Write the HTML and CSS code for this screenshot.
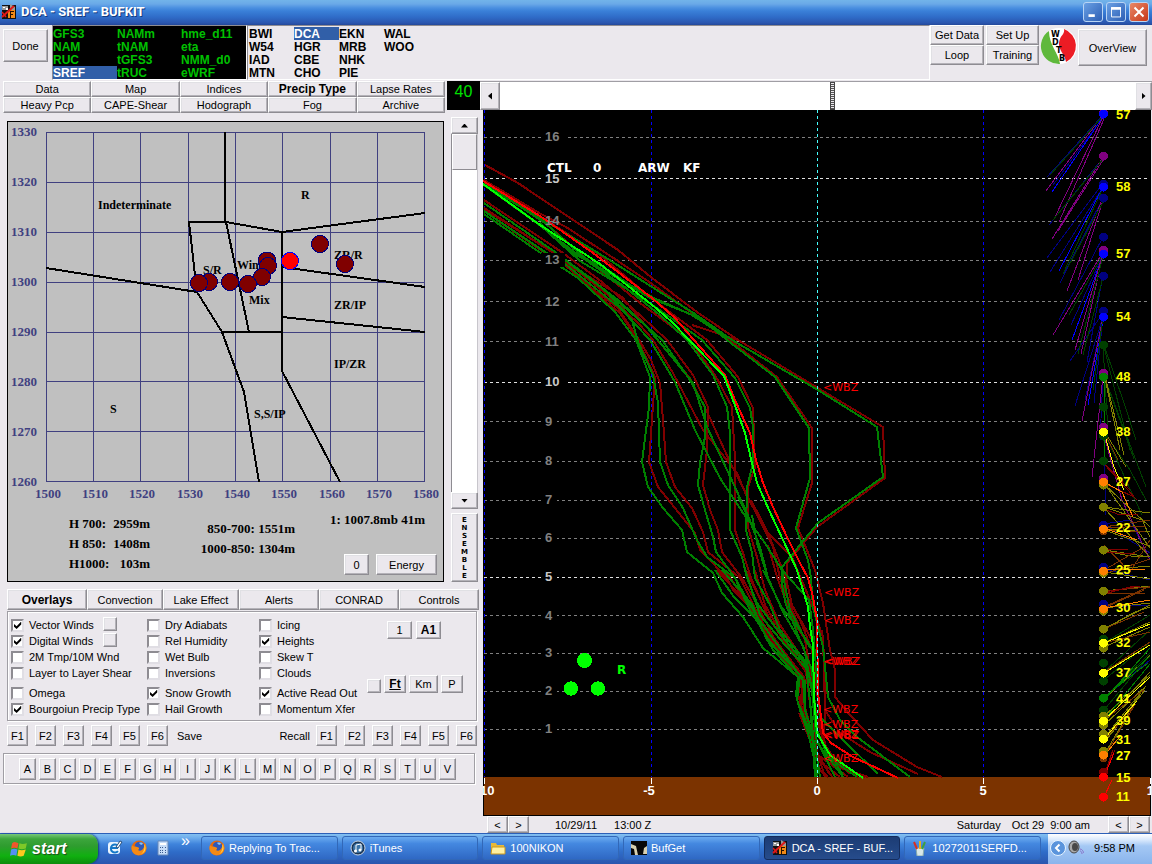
FILE: index.html
```html
<!DOCTYPE html>
<html lang="en">
<head>
<meta charset="utf-8">
<title>DCA - SREF - BUFKIT</title>
<link rel="stylesheet" href="styles.css">
</head>
<body>
<svg width="0" height="0" class="defs" aria-hidden="true">
  <defs>
    <symbol id="bufkit" viewBox="0 0 16 16">
      <rect x="1" y="1" width="14" height="14" fill="#111"/>
      <path d="M1 2h6v4H1zM9 0l5 3v3H9z" fill="#9a9a9a"/>
      <path d="M2 3h2v1H2zM5 4h2v2H5z" fill="#fff"/>
      <path d="M7 6h7v8H7z" fill="#f08a18"/>
      <path d="M9 7h4v1h-3v2h2v1h-2v3H9z" fill="#281000"/>
      <path d="M1 13L13 2" stroke="#e01818" stroke-width="2"/>
      <path d="M1 8l4 5" stroke="#e01818" stroke-width="1.500"/>
    </symbol>
    <symbol id="firefox" viewBox="0 0 16 16">
      <circle cx="8" cy="8" r="7.500" fill="#e8690b"/>
      <circle cx="8.500" cy="6.500" r="4.800" fill="#2f58b8"/>
      <path d="M8 3c2-1 4 0 4 1l-2 1z" fill="#8bc4f4"/>
      <path d="M1 5c1 2 3 1 5 2 2 0 3 2 1 3 2 2 5 0 6-3l1-4c3 5 1 11-5 12C3 16-1 11 1 5z" fill="#f48a14"/>
      <path d="M13 4c3 4 1 9-3 10 3-2 4-6 3-10z" fill="#ffd248"/>
    </symbol>
  </defs>
</svg>

<header class="titlebar">
  <svg class="icon16" aria-hidden="true"><use href="#bufkit"/></svg>
  <h1>DCA - SREF - BUFKIT</h1>
  <div class="winbtns">
    <button class="winbtn" aria-label="Minimize"><svg viewBox="0 0 20 20"><path d="M5 14h7" stroke="#fff" stroke-width="3"/></svg></button>
    <button class="winbtn" aria-label="Maximize"><svg viewBox="0 0 20 20"><path d="M5 5.500h10v10H5z" fill="none" stroke="#fff"/><path d="M4.500 6h11" stroke="#fff" stroke-width="3"/></svg></button>
    <button class="winbtn close" aria-label="Close"><svg viewBox="0 0 20 20"><path d="M5 5l10 10M15 5L5 15" stroke="#fff" stroke-width="2.200"/></svg></button>
  </div>
</header>

<div class="toolbar">
  <button class="btn done">Done</button>
  <ul class="list models">
    <li>GFS3</li><li>NAM</li><li>RUC</li><li class="sel">SREF</li>
    <li>NAMm</li><li>tNAM</li><li>tGFS3</li><li>tRUC</li>
    <li>hme_d11</li><li>eta</li><li>NMM_d0</li><li>eWRF</li>
  </ul>
  <ul class="list stations">
    <li>BWI</li><li>W54</li><li>IAD</li><li>MTN</li>
    <li class="sel">DCA</li><li>HGR</li><li>CBE</li><li>CHO</li>
    <li>EKN</li><li>MRB</li><li>NHK</li><li>PIE</li>
    <li>WAL</li><li>WOO</li>
  </ul>
  <div class="pair"><button class="btn">Get Data</button><button class="btn">Loop</button></div>
  <div class="pair second"><button class="btn">Set Up</button><button class="btn">Training</button></div>
  <svg class="logo" viewBox="0 0 38 38" role="img" aria-label="WDTB">
    <circle cx="19" cy="19" r="18" fill="#fff"/>
    <path d="M9 4A18 18 0 0 0 20 37C19 27 9 18 9 4z" fill="#5fb83c"/>
    <path d="M24 2A18 18 0 0 1 26 35C25 26 16 22 20 12c1-4 5-5 4-10z" fill="#ec1c24"/>
    <g class="logotext"><text x="11" y="10">W</text><text x="12" y="18">D</text><text x="16" y="26">T</text><text x="19" y="34">B</text></g>
  </svg>
  <button class="btn overview">OverView</button>
</div>

<main class="main">
  <section class="left">
    <div class="tabrow">
      <nav class="tabs">
        <button class="btn">Data</button><button class="btn">Map</button><button class="btn">Indices</button><button class="btn on">Precip Type</button><button class="btn">Lapse Rates</button>
        <button class="btn">Heavy Pcp</button><button class="btn">CAPE-Shear</button><button class="btn">Hodograph</button><button class="btn">Fog</button><button class="btn">Archive</button>
      </nav>
      <output class="counter">40</output>
    </div>

    <div class="precip">
      <div class="panel">
        <svg class="chart" viewBox="8 122 435 380" role="img" aria-label="Precipitation type nomogram">
          <g class="grid">
            <path d="M46.500 132V482M93.500 132V482M140.500 132V482M188.500 132V482M235.500 132V482M282.500 132V482M330.500 132V482M377.500 132V482M424.500 132V482"/>
            <path d="M46 132.500H425M46 182.500H425M46 232.500H425M46 282.500H425M46 332.500H425M46 381.500H425M46 431.500H425M46 481.500H425"/>
          </g>
          <g class="axis">
            <text x="11" y="136">1330</text><text x="11" y="186">1320</text><text x="11" y="236">1310</text><text x="11" y="286">1300</text><text x="11" y="336">1290</text><text x="11" y="386">1280</text><text x="11" y="436">1270</text><text x="11" y="486">1260</text>
            <text x="35" y="498">1500</text><text x="82" y="498">1510</text><text x="129" y="498">1520</text><text x="177" y="498">1530</text><text x="224" y="498">1540</text><text x="271" y="498">1550</text><text x="319" y="498">1560</text><text x="366" y="498">1570</text><text x="413" y="498">1580</text>
          </g>
          <g class="zone">
            <text x="98" y="209">Indeterminate</text><text x="301" y="199">R</text><text x="334" y="259">ZR/R</text><text x="203" y="274">S/R</text><text x="237" y="269">Wintry</text><text x="249" y="304">Mix</text><text x="334" y="309">ZR/IP</text><text x="334" y="368">IP/ZR</text><text x="110" y="413">S</text><text x="254" y="418">S,S/IP</text>
          </g>
          <g class="bound">
            <path d="M225 132V222M188 222H226L282 232L425 213M189 222L195 275L197 292M46 268L197 292L222 332L244 392L259 482M226 222L249 332M221 332H282M282 232V371L340 482M282 267L425 287M282 317L425 332"/>
          </g>
          <g class="member">
            <circle cx="320" cy="244" r="8.500"/><circle cx="345" cy="264" r="8.500"/><circle cx="267" cy="261" r="9"/><circle cx="268" cy="266" r="8.500"/><circle cx="262" cy="277" r="8.500"/><circle cx="248" cy="284" r="8.500"/><circle cx="230" cy="282" r="8.500"/><circle cx="209" cy="282" r="8.500"/><circle cx="199" cy="283" r="8.500"/>
            <circle class="ctl" cx="290" cy="261" r="8.500"/>
          </g>
        </svg>
        <div class="readouts">
          <dl class="heights"><dt>H 700:</dt><dd>2959m</dd><dt>H 850:</dt><dd>1408m</dd><dt>H1000:</dt><dd>103m</dd></dl>
          <div class="thick"><p>850-700: 1551m</p><p>1000-850: 1304m</p></div>
          <div class="surface"><p>1: 1007.8mb 41m</p><div class="acts"><button class="btn zerobtn">0</button><button class="btn energy">Energy</button></div></div>
        </div>
      </div>
      <div class="side">
        <div class="vscroll">
          <button class="btn" aria-label="Up"><i class="arrow up"></i></button>
          <div class="track"><div class="thumb"></div></div>
          <button class="btn" aria-label="Down"><i class="arrow down"></i></button>
        </div>
        <button class="btn ensemble" aria-label="Ensemble"><span>E</span><span>N</span><span>S</span><span>E</span><span>M</span><span>B</span><span>L</span><span>E</span></button>
      </div>
    </div>

    <nav class="modes">
      <button class="btn on">Overlays</button><button class="btn">Convection</button><button class="btn">Lake Effect</button><button class="btn">Alerts</button><button class="btn">CONRAD</button><button class="btn">Controls</button>
    </nav>

    <div class="options">
      <div class="col">
        <div class="row"><label><input type="checkbox" checked>Vector Winds</label><button class="btn sq" aria-label="Vector wind color"></button></div>
        <div class="row"><label><input type="checkbox" checked>Digital Winds</label><button class="btn sq" aria-label="Digital wind color"></button></div>
        <label><input type="checkbox">2M Tmp/10M Wnd</label>
        <label><input type="checkbox">Layer to Layer Shear</label>
        <label class="gap"><input type="checkbox">Omega</label>
        <label><input type="checkbox" checked>Bourgoiun Precip Type</label>
      </div>
      <div class="col">
        <label><input type="checkbox">Dry Adiabats</label>
        <label><input type="checkbox">Rel Humidity</label>
        <label><input type="checkbox">Wet Bulb</label>
        <label><input type="checkbox">Inversions</label>
        <label class="gap"><input type="checkbox" checked>Snow Growth</label>
        <label><input type="checkbox">Hail Growth</label>
      </div>
      <div class="col">
        <label><input type="checkbox">Icing</label>
        <label><input type="checkbox" checked>Heights</label>
        <label><input type="checkbox">Skew T</label>
        <label><input type="checkbox">Clouds</label>
        <label class="gap"><input type="checkbox" checked>Active Read Out</label>
        <label><input type="checkbox">Momentum Xfer</label>
      </div>
      <div class="units">
        <div class="urow top"><button class="btn">1</button><button class="btn on">A1</button></div>
        <div class="urow"><button class="btn sq" aria-label="Read out color"></button><button class="btn on u">Ft</button><button class="btn km">Km</button><button class="btn">P</button></div>
      </div>
    </div>

    <div class="fkeys">
      <div class="keys"><button class="btn">F1</button><button class="btn">F2</button><button class="btn">F3</button><button class="btn">F4</button><button class="btn">F5</button><button class="btn">F6</button></div>
      <span>Save</span><span class="recall">Recall</span>
      <div class="keys"><button class="btn">F1</button><button class="btn">F2</button><button class="btn">F3</button><button class="btn">F4</button><button class="btn">F5</button><button class="btn">F6</button></div>
    </div>

    <div class="letters">
      <button class="btn">A</button><button class="btn">B</button><button class="btn">C</button><button class="btn">D</button><button class="btn">E</button><button class="btn">F</button><button class="btn">G</button><button class="btn">H</button><button class="btn">I</button><button class="btn">J</button><button class="btn">K</button><button class="btn">L</button><button class="btn">M</button><button class="btn">N</button><button class="btn">O</button><button class="btn">P</button><button class="btn">Q</button><button class="btn">R</button><button class="btn">S</button><button class="btn">T</button><button class="btn">U</button><button class="btn">V</button>
    </div>
  </section>

  <section class="right">
    <div class="hscroll">
      <button class="btn" aria-label="Left"><i class="arrow lft"></i></button>
      <div class="htrack"><div class="hthumb"></div></div>
      <button class="btn" aria-label="Right"><i class="arrow rgt"></i></button>
    </div>
    <svg class="sounding" viewBox="483 110 668 706" role="img" aria-label="Ensemble wet bulb profiles">
      <rect x="483" y="110" width="668" height="706" fill="#000"/>
      <rect x="484" y="777" width="666" height="38" fill="#7b3300"/>

      <g class="hgrid">
        <path d="M484 137.500H1150M484 221.500H1150M484 260.500H1150M484 301.500H1150M484 341.500H1150M484 421.500H1150M484 461.500H1150M484 500.500H1150M484 538.500H1150M484 615.500H1150M484 653.500H1150M484 691.500H1150M484 729.500H1150"/>
        <path class="major" d="M484 178.500H1150M484 382.500H1150M484 577.500H1150"/>
      </g>
      <path class="vgrid" d="M484.500 110V777M651.500 110V777M983.500 110V777"/>

      <g class="dry">
        <path d="M485 165L518 183L618 250L652 278L697 312L738 340L883 427L885 478L817 527L787 563L786 595L800 620L812 650L818 700L822 740L835 760L858 777"/>
        <path d="M484 180L541 214L566 227L615 259L652 284L692 313L730 340L777 377L812 428L812 483L798 528L815 570L823 603L830 650L835 670L835 697L850 715L873 740L917 767L942 777"/>
        <path d="M484 180L560 229L600 255L650 297L675 316L707 340L738 377L753 408L755 467L748 487L748 527L757 557L765 590L780 625L800 655L812 690L820 730L828 752L850 774"/>
        <path d="M484 183L543 221L590 262L640 303L690 340L715 375L732 407L735 460L735 530L743 553L751 578L765 610L780 635L806 672L812 720L818 760L840 777"/>
        <path d="M484 200L563 253L602 282L640 315L667 340L693 375L708 407L707 450L703 485L710 510L718 530L722 552L742 578L757 604L775 640L804 677L802 700L812 735L825 777"/>
        <path d="M484 208L552 252L570 265L610 297L640 325L653 340L673 373L703 430L737 473L747 497L768 533L792 557L810 600L823 637L825 710L840 733L870 752L918 774"/>
        <path d="M484 211L545 253L563 263L600 297L620 313L638 340L655 377L649 462L658 487L695 533L700 550L727 578L733 590L760 617L773 650L802 677L798 695L808 727L820 770L828 777"/>
        <path d="M484 209L560 257L590 287L618 308L641 343L651 360L660 383L663 420L666 462L675 487L692 508L703 532L708 552L740 578L757 612L778 650L803 680L800 708L812 745L832 777"/>
        <path d="M565 262L622 297L660 343L690 378L710 418L730 462L753 507L773 547L780 578L790 605L805 640L812 680L818 735L835 765L865 777"/>
        <path d="M692 325L738 340M768 545L777 577L795 625L817 655M751 500L768 533L786 578L792 605L812 640"/>
        <path d="M716 570L745 600L767 635L803 678M725 570L747 603L777 642L806 681M746 570L770 620L795 655M755 570L765 605L785 640L812 680M822 630L826 680L824 740L832 765L868 777M799 713L812 745L830 775M803 700L818 755L848 777"/>
      </g>
      <g class="wet">
        <path d="M484 184L560 230L608 259L652 287L695 314L732 340L818 390L877 427L883 477L818 523L782 567L782 585L786 605L800 640L812 670L817 730L828 757L857 777"/>
        <path d="M484 183L545 223L580 254L595 265L650 298L700 318L727 340L775 377L809 428L810 478L803 503L796 528L808 560L811 578L813 607L823 647L828 697L840 720L857 737L910 777"/>
        <path d="M484 184L540 225L580 261L645 300L674 320L702 340L735 378L750 408L753 427L753 463L747 487L746 530L752 553L755 578L770 605L780 630L806 662L812 690L818 735L843 775"/>
        <path d="M484 185L538 224L577 254L622 285L660 315L687 340L713 375L727 407L730 433L730 530L742 557L747 578L757 603L785 640L806 665L812 720L815 777"/>
        <path d="M484 203L555 252L590 278L630 312L662 340L688 377L705 407L705 437L700 463L698 485L705 510L713 537L716 552L735 578L757 617L780 648L803 680L805 710L815 745L820 777"/>
        <path d="M484 211L545 252L565 264L620 308L650 340L675 382L695 430L720 478L743 513L763 540L782 570L809 600L813 630L820 717L843 740L878 774"/>
        <path d="M484 214L542 254L561 267L578 278L615 312L636 340L650 377L649 407L642 462L648 487L663 508L682 530L687 552L713 573L722 593L743 617L763 648L798 677L796 695L800 710L808 733L817 770V777"/>
        <path d="M565 260L605 290L632 320L638 342L653 375L658 403L660 462L668 485L683 508L697 540L707 557L735 578L750 610L770 642L800 675L797 700L812 737L817 777"/>
        <path d="M570 264L618 300L645 325L662 345L693 383L707 427L727 470L747 513L760 547L768 578L783 612L804 648L812 690L816 738L835 777"/>
        <path d="M540 223L575 255L600 265L630 285L656 299L692 315L727 338M752 515L757 543L768 578M738 497L747 515L746 530"/>
        <path d="M715 570L734 597L757 620L773 650L799 678M722 570L752 604L767 640L803 678M745 570L760 615L785 645L806 668M763 570L782 608L800 630L813 650M782 570L790 610L810 648M805 680L805 710L813 735M810 700L815 777M815 740L843 777"/>
      </g>
      <path class="ctlred" d="M483 181L543 218L593 253L652 298L675 318L693 339L725 375L735 400L750 433L756 460L763 483L773 507L787 537L800 563L808 578L813 597L817 620L818 693L823 733L831 743L853 757L898 778"/>
      <path class="ctlgreen" d="M483 184L540 225L600 264L651 304L672 322L689 340L724 376L733 400L745 433L752 463L757 483L769 510L783 540L797 570L803 590L808 607L810 627L813 645L814 697L817 733L830 755L863 778"/>
      <path class="zero" d="M817.500 110V777"/>
      <path d="M484.500 778V784M651.500 778V784M817.500 778V784M983.500 778V784M1150 778V784" stroke="#fff"/>

      <g fill="#000">
        <path d="M541 131h24v13h-24zM541 171h24v14h-24zM541 253h24v14h-24zM541 295h24v13h-24zM541 335h24v13h-24zM541 376h24v13h-24zM541 415h16v13h-16zM541 455h16v13h-16zM541 494h16v13h-16zM541 532h16v13h-16zM541 571h16v13h-16zM541 609h16v13h-16zM541 647h16v13h-16zM541 685h16v13h-16zM541 723h16v13h-16z"/>
      </g>
      <g class="hlabel">
        <text x="545" y="141">16</text><text class="maj" x="545" y="183">15</text><text x="545" y="225">14</text><text x="545" y="264">13</text><text x="545" y="306">12</text><text x="545" y="346">11</text><text class="maj" x="545" y="386">10</text><text x="545" y="426">9</text><text x="545" y="465">8</text><text x="545" y="504">7</text><text x="545" y="542">6</text><text class="maj" x="545" y="581">5</text><text x="545" y="620">4</text><text x="545" y="657">3</text><text x="545" y="695">2</text><text x="545" y="733">1</text>
      </g>
      <g class="tlabel"><text x="485" y="795">-10</text><text x="649" y="795">-5</text><text x="817" y="795">0</text><text x="983" y="795">5</text><text x="1154" y="795">10</text></g>
      <g class="run"><text x="547" y="172">CTL</text><text x="593" y="172">0</text><text x="638" y="172">ARW</text><text x="683" y="172">KF</text></g>
      <g class="wbz">
        <text x="823" y="391">&lt;WBZ</text><text x="824" y="596">&lt;WBZ</text><text x="824" y="624">&lt;WBZ</text><text x="823" y="665">&lt;WBZ</text><text x="825" y="665">&lt;WBZ</text><text x="823" y="713">&lt;WBZ</text><text x="823" y="728">&lt;WBZ</text><text x="823" y="738">&lt;WBZ</text><text x="824" y="739">&lt;WBZ</text><text x="823" y="762">&lt;WBZ</text>
      </g>
      <g fill="#0f0"><circle cx="584.500" cy="660.500" r="7.500"/><circle cx="571" cy="688.500" r="7.200"/><circle cx="598" cy="688.500" r="7.200"/><text class="rain" x="617" y="674">R</text></g>

      <g class="wind">
        <path stroke="#000080" d="M1103 115L1047 177M1103 117L1053 185M1103 158L1049 225M1103 183L1047 258M1103 187L1050 272M1103 198L1060 283M1103 198L1064 274M1103 237L1059 320M1103 255L1071 325M1103 275L1090 345M1103 275L1087 362M1103 313L1070 361M1103 317L1075 406M1103 317L1094 403M1103 317L1085 400M1103 376L1100 440M1104 432L1106 515M1104 524L1150 553M1104 569L1150 580M1104 607L1150 605M1104 698L1150 660M1104 524L1130 520L1150 559"/>
        <path stroke="#00f" d="M1103 117L1052 192M1103 187L1059 271M1103 255L1072 340M1103 320L1088 405"/>
        <path stroke="#800080" d="M1103 115L1046 191M1103 117L1054 219M1104 119L1059 222M1103 157L1052 239M1103 160L1058 231M1103 197L1067 291M1103 200L1078 280M1103 252L1053 335M1103 253L1075 350M1103 254L1081 354M1103 317L1082 421M1103 376L1092 477M1103 432L1122 500L1150 560"/>
        <path stroke="#004000" d="M1103 116L1050 175M1103 159L1053 220M1103 188L1063 274M1103 202L1068 267M1103 254L1069 315M1103 256L1078 354M1103 277L1083 355M1103 317L1093 390M1103 345L1108 432M1104 347L1130 450M1104 376L1134 459M1104 376L1146 487M1104 432L1142 515M1104 432L1130 470L1146 500M1104 345L1124 403L1136 440M1104 643L1150 615M1104 672L1150 630M1104 680L1150 642M1104 698L1150 653M1104 710L1150 655"/>
        <path stroke="#808000" d="M1105 376L1124 455M1105 378L1120 450M1105 432L1126 467M1104 483L1150 548M1104 484L1150 527M1104 507L1150 513M1104 507L1142 520L1150 537M1104 508L1150 557M1104 529L1150 532M1104 550L1150 557M1104 551L1136 557L1150 556M1104 570L1150 566M1104 572L1150 579M1104 591L1150 586M1104 608L1150 603M1104 629L1150 605M1104 643L1150 622M1104 647L1150 627M1104 672L1150 645M1104 700L1150 655M1104 716L1150 675M1104 722L1150 672M1104 725L1146 686M1104 738L1146 686M1104 742L1140 695M1104 743L1145 690M1104 755L1138 697M1104 530L1150 546M1104 629L1135 612L1150 607"/>
        <path stroke="#008000" d="M1104 376L1105 458M1104 698L1150 656M1104 697L1148 663M1104 700L1150 648M1104 720L1150 664"/>
        <path stroke="#7b3300" d="M1104 432L1118 460M1104 528L1146 526M1104 527L1150 520M1104 530L1145 532M1104 570L1144 547M1104 574L1150 559M1104 607L1150 586M1104 608L1144 590M1104 591L1150 587M1104 593L1145 593M1104 629L1144 612M1104 643L1150 632M1104 672L1150 642M1104 720L1144 690M1104 740L1136 704M1104 757L1134 706M1104 545L1130 572L1150 540"/>
        <path stroke="#800000" d="M1104 463L1130 490M1104 464L1137 500M1104 483L1134 497M1104 509L1120 515L1138 514M1104 550L1128 549M1104 552L1135 554M1104 592L1140 586M1104 594L1134 586M1104 776L1113 750M1105 775L1112 752M1107 768L1115 750"/>
        <path stroke="#ff8000" d="M1104 482L1122 492L1133 517M1104 528L1137 540M1104 570L1146 569M1104 608L1150 600M1104 756L1121 735"/>
        <path stroke="#ff0" d="M1104 432L1114 467L1124 490M1104 643L1150 624M1104 673L1150 645M1104 720L1150 677M1104 739L1137 701"/>
        <path stroke="#f00" d="M1104 777L1114 753M1104 797L1112 780"/>
      </g>
      <g class="dots">
        <g fill="#000080"><circle cx="1103.500" cy="184" r="4.500"/><circle cx="1103.500" cy="198" r="4.500"/><circle cx="1103.500" cy="237" r="4.500"/><circle cx="1103.500" cy="276" r="4.500"/><circle cx="1103.500" cy="311" r="4.500"/><circle cx="1103.500" cy="525" r="4.500"/><circle cx="1103.500" cy="567" r="4.500"/><circle cx="1103.500" cy="604" r="4.500"/></g>
        <g fill="#800080"><circle cx="1103.500" cy="113" r="4.500"/><circle cx="1103.500" cy="156" r="4.500"/><circle cx="1103.500" cy="250" r="4.500"/><circle cx="1103.500" cy="373" r="4.500"/><circle cx="1103.500" cy="427" r="4.500"/><circle cx="1103.500" cy="478" r="4.500"/></g>
        <g fill="#004000"><circle cx="1103.500" cy="345" r="4.500"/><circle cx="1103.500" cy="407" r="4.500"/><circle cx="1103.500" cy="436" r="4.500"/><circle cx="1103.500" cy="461" r="4.500"/><circle cx="1103.500" cy="639" r="4.500"/><circle cx="1103.500" cy="663" r="4.500"/><circle cx="1103.500" cy="681" r="4.500"/><circle cx="1103.500" cy="710" r="4.500"/></g>
        <g fill="#808000"><circle cx="1103.500" cy="485" r="4.500"/><circle cx="1103.500" cy="507" r="4.500"/><circle cx="1103.500" cy="550" r="4.500"/><circle cx="1103.500" cy="573" r="4.500"/><circle cx="1103.500" cy="591" r="4.500"/><circle cx="1103.500" cy="611" r="4.500"/><circle cx="1103.500" cy="629" r="4.500"/><circle cx="1103.500" cy="648" r="4.500"/><circle cx="1103.500" cy="716" r="4.500"/><circle cx="1103.500" cy="725" r="4.500"/><circle cx="1103.500" cy="734" r="4.500"/><circle cx="1103.500" cy="751" r="4.500"/></g>
        <g fill="#7b3300"><circle cx="1103.500" cy="531" r="4"/><circle cx="1103.500" cy="758" r="4"/></g>
        <g fill="#00f"><circle cx="1103.500" cy="114" r="4.500"/><circle cx="1103.500" cy="187" r="4.500"/><circle cx="1103.500" cy="254" r="4.500"/><circle cx="1103.500" cy="317" r="4.500"/></g>
        <g fill="#008000"><circle cx="1103.500" cy="377" r="4.500"/><circle cx="1103.500" cy="698" r="4.500"/></g>
        <g fill="#ff0"><circle cx="1103.500" cy="432" r="4.500"/><circle cx="1103.500" cy="643" r="4.500"/><circle cx="1103.500" cy="673" r="4.500"/><circle cx="1103.500" cy="721" r="4.500"/><circle cx="1103.500" cy="739" r="4.500"/></g>
        <g fill="#ff8000"><circle cx="1103.500" cy="482" r="4.500"/><circle cx="1103.500" cy="529" r="4.500"/><circle cx="1103.500" cy="571" r="4.500"/><circle cx="1103.500" cy="609" r="4.500"/><circle cx="1103.500" cy="755" r="4.500"/></g>
        <circle cx="1103.500" cy="772" r="4.500" fill="#800000"/>
        <g fill="#f00"><circle cx="1103.500" cy="777" r="4.500"/><circle cx="1103.500" cy="797" r="4.500"/></g>
      </g>
      <g class="speed">
        <text x="1116" y="119">57</text><text x="1116" y="191">58</text><text x="1116" y="258">57</text><text x="1116" y="321">54</text><text x="1116" y="381">48</text><text x="1116" y="436">38</text><text x="1116" y="486">27</text><text x="1116" y="532">22</text><text x="1116" y="574">25</text><text x="1116" y="612">30</text><text x="1116" y="647">32</text><text x="1116" y="677">37</text><text x="1116" y="703">41</text><text x="1116" y="725">39</text><text x="1116" y="744">31</text><text x="1116" y="760">27</text><text x="1116" y="782">15</text><text x="1116" y="801">11</text>
      </g>
    </svg>
    <div class="timebar">
      <div class="step"><button class="btn" aria-label="Previous hour">&lt;</button><button class="btn" aria-label="Next hour">&gt;</button></div>
      <time class="utc"><span>10/29/11</span><span>13:00 Z</span></time>
      <time class="local"><span>Saturday</span><span>Oct 29&nbsp; 9:00 am</span></time>
      <div class="step"><button class="btn" aria-label="Back">&lt;</button><button class="btn" aria-label="Forward">&gt;</button></div>
    </div>
  </section>
</main>

<footer class="taskbar">
  <button class="start">
    <svg viewBox="0 0 20 20" aria-hidden="true"><path d="M3 4c2-2 4-1 6 0L8 9C6 8 4 8 2 9z" fill="#f0562c"/><path d="M10 4c2 1 4 1 7 0l-1 5c-3 1-5 1-7 0z" fill="#7ec828"/><path d="M2 10c2-1 4-1 6 0l-1 6c-2-1-4-1-6 0z" fill="#5490f0"/><path d="M9 10c2 1 4 1 7 0l-2 6c-2 1-4 1-6 0z" fill="#fbc920"/></svg>
    start
  </button>
  <div class="quick">
    <button aria-label="Outlook Express"><svg class="icon16" viewBox="0 0 16 16"><rect x="1" y="2" width="12" height="12" rx="3" fill="#eaf5ff"/><path d="M11 6a4 4 0 1 0 0 5M4 8h7" fill="none" stroke="#1478c8" stroke-width="2"/><path d="M9 7l4-6 2 1-4 6z" fill="#fff" stroke="#28507c"/></svg></button>
    <button aria-label="Firefox"><svg class="icon16"><use href="#firefox"/></svg></button>
    <button aria-label="Calculator"><svg class="icon16" viewBox="0 0 16 16"><path d="M3 1h10v14H3z" fill="#c6dcf8" stroke="#6688b8"/><path d="M5 3h6v2H5z" fill="#fff"/><path d="M5 7h1v1H5zM7 7h1v1H7zM10 7h1v1h-1zM5 10h1v1H5zM7 10h1v1H7zM10 10h1v1h-1zM5 12h1v1H5zM7 12h1v1H7zM10 12h1v1h-1z" fill="#395b90"/></svg></button>
    <button class="more" aria-label="More">»</button>
  </div>
  <nav class="tasks">
    <button><svg class="icon16" aria-hidden="true"><use href="#firefox"/></svg>Replying To Trac...</button>
    <button><svg class="icon16" viewBox="0 0 16 16" aria-hidden="true"><circle cx="8" cy="8" r="7" fill="#1b3554" stroke="#c8d4e0"/><circle cx="8" cy="8" r="5" fill="#3b74a8"/><path d="M6 11V5l5-1v6" fill="none" stroke="#fff"/><circle cx="5.500" cy="11" r="1.500" fill="#fff"/><circle cx="10" cy="10" r="1.500" fill="#fff"/></svg>iTunes</button>
    <button><svg class="icon16" viewBox="0 0 16 16" aria-hidden="true"><path d="M1 3h5l1 2h7v9H1z" fill="#e8b838"/><path d="M2 7h13v7H1z" fill="#fff0a0" stroke="#c89820"/></svg>100NIKON</button>
    <button><svg class="icon16" viewBox="0 0 16 16" aria-hidden="true"><rect y="1" width="16" height="14" fill="#080808"/><path d="M0 4l5 2 2 9H4L3 9 0 8zM16 6l-3 2-1 6h4z" fill="#d8d0b0"/></svg>BufGet</button>
    <button class="active"><svg class="icon16" aria-hidden="true"><use href="#bufkit"/></svg>DCA - SREF - BUF...</button>
    <button><svg class="icon16" viewBox="0 0 16 16" aria-hidden="true"><path d="M4 8h8l-1 8H5z" fill="#d8e8e8" stroke="#8aa"/><path d="M5 9L2 2" stroke="#d83020" stroke-width="2"/><path d="M8 9V1" stroke="#e8b020" stroke-width="2"/><path d="M10 9l3-7" stroke="#40a040" stroke-width="2"/></svg>10272011SERFD...</button>
  </nav>
  <div class="tray">
    <button aria-label="Show hidden icons"><svg class="icon16" viewBox="0 0 16 16"><circle cx="8" cy="8" r="7.500" fill="#5a94dc" stroke="#e8f4ff"/><path d="M9.500 4.500L6 8l3.500 3.500" fill="none" stroke="#fff" stroke-width="2"/></svg></button>
    <svg class="icon16" viewBox="0 0 16 16" role="img" aria-label="Volume"><ellipse cx="6" cy="7" rx="5" ry="6" fill="#a8a8a8" stroke="#444"/><ellipse cx="7" cy="7" rx="3" ry="4" fill="#484848"/><path d="M12 11c1 0 2 1 2 3M12 9c2 0 3 2 4 4" fill="none" stroke="#8870c8"/></svg>
    <time>9:58 PM</time>
  </div>
</footer>
</body>
</html>
```
FILE: styles.css
```css
* { box-sizing: border-box; }
body {
  margin: 0;
  min-height: 100vh;
  display: flex;
  flex-direction: column;
  background: #ebe8ed;
  color: #000;
  font: 11px/14px "Liberation Sans", Arial, sans-serif;
}
.defs { position: absolute; }
button, input { font: inherit; color: inherit; margin: 0; padding: 0; }
ul, dl, dd, p, h1 { margin: 0; padding: 0; }
svg { display: block; }
.icon16 { width: 16px; height: 16px; flex: none; }

.btn {
  background: #ebe8ed;
  border: 1px solid;
  border-color: #fff #8e8c92 #8e8c92 #fff;
  box-shadow: inset -1px -1px 0 #b4b2b8, inset 1px 1px 0 #e0e0e4;
  border-radius: 0;
  white-space: nowrap;
  display: flex;
  align-items: center;
  justify-content: center;
  line-height: 12px;
}
.btn.on { font-weight: bold; font-size: 12px; }

/* Title bar */
.titlebar {
  height: 25px;
  display: flex;
  align-items: center;
  padding: 0 3px 2px 1px;
  gap: 4px;
  background: linear-gradient(#72b4ea 0, #6aa9e8 4px, #4a8fe0 8px, #3a80d8 11px, #2f6cc8 17px, #2a55ae 23px, #23489a 100%);
}
.titlebar h1 {
  flex: 1;
  color: #fff;
  font: bold 13px/20px Roboto, "Liberation Sans", sans-serif;
  text-shadow: 1px 1px 0 #123a80;
}
.winbtns { display: flex; gap: 3px; }
.winbtn {
  width: 20px;
  height: 20px;
  border: 1px solid #b8d4f4;
  border-radius: 3px;
  background: linear-gradient(135deg, #6aa0e4, #2c5eb4);
}
.winbtn.close { background: linear-gradient(135deg, #e88868, #c83818); }
.winbtn svg { width: 18px; height: 18px; }

/* Top toolbar */
.toolbar { display: flex; height: 56px; padding-left: 3px; }
.done { width: 45px; height: 33px; margin: 4px 4px 0 0; }
.list {
  list-style: none;
  display: grid;
  grid-auto-flow: column;
  grid-template-rows: repeat(4, 13px);
  height: 55px;
  border: 1px solid;
  border-color: #8e8c92 #fff #fff #8e8c92;
  padding-top: 1px;
  font: bold 12px/14px "Liberation Sans", Arial, sans-serif;
}
.models { background: #000; color: #00c000; grid-auto-columns: 64px; width: 195px; }
.stations { flex: 1; grid-auto-columns: 45px; padding-left: 1px; }
.list .sel { background: #315fa8; color: #fff; }
.pair { display: flex; flex-direction: column; width: 54px; }
.pair .btn { height: 20px; }
.pair.second { width: 53px; margin-left: 2px; }
.logo { width: 38px; height: 38px; margin: 2px 0 0 1px; }
.logotext { font: bold 8px "DejaVu Sans", sans-serif; }
.overview { width: 69px; height: 37px; margin: 4px 5px 0 0; }

/* Two-column body */
.main { display: flex; flex: 1; align-items: flex-start; }
.left { width: 480px; flex: none; }
.right { flex: 1; min-width: 0; }

.tabrow { display: flex; padding-left: 3px; gap: 2px; }
.tabs { flex: 1; display: grid; grid-template-columns: repeat(5, 1fr); grid-auto-rows: 16px; }
.counter { width: 33px; height: 29px; background: #000; color: #00e000; font-size: 16px; line-height: 22px; text-align: center; }

.precip { display: flex; padding: 4px 2px 0 7px; gap: 7px; margin-bottom: 7px; }
.panel { flex: 1; border: 1px solid #000; background: #c0c0c0; margin-top: 4px; }
.chart { width: 100%; height: auto; shape-rendering: crispEdges; }
.grid { stroke: #404080; fill: none; }
.axis { font: bold 13px "Liberation Serif", "Times New Roman", serif; fill: #404080; }
.zone { font: bold 12px "Liberation Serif", "Times New Roman", serif; }
.bound { stroke: #000; stroke-width: 2px; fill: none; }
.member { fill: #800000; stroke: #000080; }
.member .ctl { fill: #f00; stroke: #00f; }

.readouts {
  display: flex;
  gap: 35px;
  height: 79px;
  padding: 8px 6px 6px 61px;
  font: bold 13px/20px "Liberation Serif", "Times New Roman", serif;
  white-space: nowrap;
}
.heights { display: grid; grid-template-columns: 41px 40px; padding-top: 4px; align-content: start; }
.heights dd { text-align: right; }
.thick { width: 110px; text-align: right; padding-top: 9px; }
.surface { flex: 1; display: flex; flex-direction: column; justify-content: space-between; }
.acts { display: flex; justify-content: flex-end; gap: 7px; font: 11px/14px "Liberation Sans", Arial, sans-serif; }
.acts .btn { height: 21px; }
.zerobtn { width: 25px; }
.energy { width: 61px; }

.side { width: 27px; display: flex; flex-direction: column; gap: 4px; }
.vscroll { flex: 1; display: flex; flex-direction: column; }
.vscroll .btn { height: 17px; }
.track { flex: 1; background: #fff; border-left: 1px solid #8e8c92; border-right: 1px solid #c8c6cc; }
.thumb { height: 36px; background: #ebe8ed; border: 1px solid; border-color: #fff #8e8c92 #8e8c92 #fff; }
.ensemble { height: 69px; flex-direction: column; font: bold 7px/8px "DejaVu Sans", sans-serif; }
.ensemble span { line-height: 8px; }
.arrow { width: 7px; height: 4px; background: #000; }
.up { clip-path: polygon(50% 0, 100% 100%, 0 100%); }
.down { clip-path: polygon(0 0, 100% 0, 50% 100%); }
.lft, .rgt { width: 4px; height: 7px; }
.lft { clip-path: polygon(100% 0, 100% 100%, 0 50%); }
.rgt { clip-path: polygon(0 0, 100% 50%, 0 100%); }

.modes { display: grid; grid-template-columns: 80fr 76fr 76fr 80fr 80fr 80fr; height: 21px; margin: 0 1px 1px 7px; }

/* Overlay options */
.options {
  display: grid;
  grid-template-columns: 136px 112px 108px 1fr;
  margin: 0 3px 0 7px;
  padding: 5px 3px 3px;
  border: 1px solid #a09ea4;
  box-shadow: inset 1px 1px 0 #fff, 1px 1px 0 #fff;
}
.col { display: flex; flex-direction: column; }
.col label { display: flex; align-items: center; gap: 5px; height: 16px; white-space: nowrap; }
.col .gap { margin-top: 4px; }
.row { display: flex; align-items: flex-start; justify-content: space-between; padding-right: 30px; }
.sq { width: 14px; height: 14px; }
input[type="checkbox"] {
  appearance: none;
  width: 13px;
  height: 13px;
  background: #fff;
  border: 2px solid;
  border-color: #8e8c92 #e0dee4 #e0dee4 #8e8c92;
  display: block;
}
input[type="checkbox"]:checked::before {
  content: "";
  display: block;
  width: 8px;
  height: 8px;
  margin: 1px;
  background: #000;
  clip-path: polygon(0 30%, 33% 60%, 90% 0, 90% 36%, 33% 95%, 0 66%);
}
.units { display: flex; flex-direction: column; justify-content: space-between; padding: 4px 13px 24px 0; }
.urow { display: flex; gap: 3px; }
.urow.top { padding-left: 20px; gap: 4px; }
.urow .btn { width: 22px; height: 18px; }
.urow.top .btn { width: 25px; }
.urow .km { width: 29px; }
.urow .sq { width: 14px; height: 14px; align-self: flex-end; }
.u { text-decoration: underline; }

.fkeys { display: flex; align-items: center; padding: 4px 3px 7px 7px; }
.fkeys > span { margin-left: 9px; }
.fkeys .recall { margin-left: auto; margin-right: 6px; }
.keys { display: flex; gap: 7px; }
.keys .btn { width: 21px; height: 21px; }
.letters {
  display: flex;
  justify-content: space-between;
  margin: 0 5px 0 3px;
  padding: 4px 18px 3px 15px;
  border: 1px solid #a09ea4;
  box-shadow: inset 1px 1px 0 #fff, 1px 1px 0 #fff;
}
.letters .btn { width: 17px; height: 22px; }

/* Sounding side */
.hscroll { display: flex; height: 29px; border-top: 1px solid #a09ea4; }
.hscroll .btn { width: 20px; }
.hscroll .btn:last-child { width: 17px; }
.htrack { flex: 1; background: #fff; display: flex; align-items: stretch; }
.hthumb { width: 5px; margin-left: 52%; background: repeating-linear-gradient(#ebe8ed 0 1px, #555 1px 2px); border: 1px solid #444; }
.sounding { width: calc(100% - 4px); height: auto; margin-left: 3px; shape-rendering: crispEdges; }
.hgrid { stroke: #808080; stroke-dasharray: 3 3; fill: none; }
.hgrid .major { stroke: #e0e0e0; }
.vgrid { stroke: #00f; stroke-dasharray: 3 3; }
.zero { stroke: #4ff; stroke-dasharray: 3 3; fill: none; }
.dry, .wet, .ctlred, .ctlgreen { fill: none; stroke-width: 2px; }
.dry { stroke: #800000; }
.wet { stroke: #008000; }
.ctlred { stroke: #f00; }
.ctlgreen { stroke: #0f0; }
.hlabel, .tlabel, .speed { font: bold 13px "Liberation Sans", Arial, sans-serif; }
.hlabel { fill: #808080; }
.hlabel .maj { fill: #c8c8c8; }
.tlabel { fill: #fff; text-anchor: middle; }
.speed { fill: #ff0; }
.run { font: bold 12px "DejaVu Sans", sans-serif; fill: #fff; }
.wbz { font: 11px "DejaVu Sans", sans-serif; fill: #f00; }
.rain { font: bold 12px "DejaVu Sans", sans-serif; }
.wind { fill: none; stroke-width: 1px; }

.timebar { display: flex; align-items: center; height: 17px; padding: 0 2px 0 7px; }
.step { display: flex; }
.step .btn { width: 21px; height: 17px; }
.timebar time { display: flex; gap: 17px; }
.utc { margin-left: 26px; }
.local { margin-left: auto; margin-right: 18px; }
.timebar .local { gap: 11px; }

/* Taskbar */
.taskbar {
  display: flex;
  height: 31px;
  color: #fff;
  border-top: 1px solid #2c60b8;
  background: linear-gradient(#84c0f0 0, #6cacec 4px, #3f84dc 10px, #2f6cc8 18px, #2a55ae 100%);
}
.taskbar button { border: 0; background: none; display: flex; align-items: center; }
.taskbar .start {
  width: 98px;
  padding-left: 9px;
  gap: 2px;
  border-radius: 0 10px 10px 0;
  background: linear-gradient(#78c878 0, #3ca63c 5px, #2f9c2f 12px, #10b010 22px, #0c8c0c 100%);
  box-shadow: 1px 0 2px #143a80;
  font: italic bold 16px/20px "Liberation Sans", Arial, sans-serif;
  text-shadow: 1px 1px 1px #1c4c1c;
}
.start svg { width: 21px; height: 21px; }
.quick { display: flex; align-items: center; width: 102px; padding-left: 9px; gap: 8px; padding-bottom: 3px; }
.more { align-self: flex-start; font-size: 16px; margin-left: 2px; }
.tasks { flex: 1; display: grid; grid-template-columns: repeat(6, 1fr); gap: 4px; padding: 2px 7px 4px 1px; }
.tasks button {
  gap: 4px;
  padding-left: 7px;
  border: 1px solid #3268b8;
  border-radius: 3px;
  background: linear-gradient(#6cacf0, #4488e0 30%, #2f68c4);
  white-space: nowrap;
  overflow: hidden;
}
.tasks .active { background: linear-gradient(#1c3c74, #264c8c); border-color: #142c5c; }
.tray {
  width: 104px;
  display: flex;
  align-items: center;
  gap: 2px;
  color: #000;
  padding: 0 17px 3px 2px;
  background: linear-gradient(#fff 0, #d8e8fc 6px, #a4c8f4 12px, #8ab4ec 100%);
}
.tray time { margin-left: auto; }
```
